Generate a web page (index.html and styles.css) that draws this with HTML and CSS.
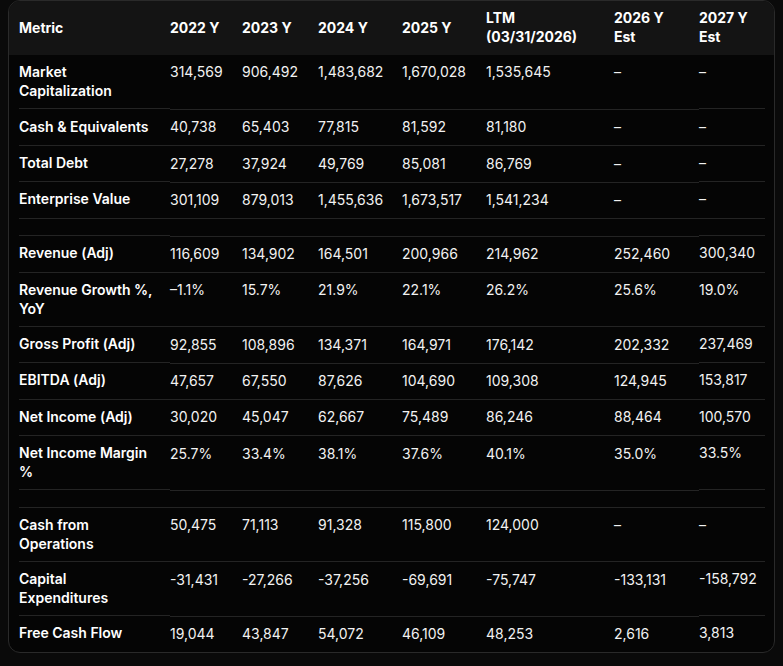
FILE: index.html
```html
<!DOCTYPE html>
<html>
<head>
<meta charset="utf-8">
<link rel="stylesheet" href="styles.css">
</head>
<body>
<div class="card">
  <table class="metrics">
    <colgroup>
      <col class="c-metric"><col class="c-22"><col class="c-23"><col class="c-24"><col class="c-25"><col class="c-ltm"><col class="c-26"><col class="c-27">
    </colgroup>
    <thead>
      <tr>
        <th class="first">Metric</th><th>2022 Y</th><th>2023 Y</th><th>2024 Y</th><th>2025 Y</th><th>LTM<br>(03/31/2026)</th><th>2026 Y<br>Est</th><th class="last">2027 Y<br>Est</th>
      </tr>
    </thead>
    <tbody>
      <tr><td class="label">Market<br>Capitalization</td><td>314,569</td><td>906,492</td><td>1,483,682</td><td>1,670,028</td><td>1,535,645</td><td>–</td><td>–</td></tr>
      <tr><td class="label">Cash &amp; Equivalents</td><td>40,738</td><td>65,403</td><td>77,815</td><td>81,592</td><td>81,180</td><td>–</td><td>–</td></tr>
      <tr><td class="label">Total Debt</td><td>27,278</td><td>37,924</td><td>49,769</td><td>85,081</td><td>86,769</td><td>–</td><td>–</td></tr>
      <tr><td class="label">Enterprise Value</td><td>301,109</td><td>879,013</td><td>1,455,636</td><td>1,673,517</td><td>1,541,234</td><td>–</td><td>–</td></tr>
      <tr class="spacer"><td></td><td></td><td></td><td></td><td></td><td></td><td></td><td></td></tr>
      <tr><td class="label">Revenue (Adj)</td><td>116,609</td><td>134,902</td><td>164,501</td><td>200,966</td><td>214,962</td><td>252,460</td><td>300,340</td></tr>
      <tr><td class="label">Revenue Growth %,<br>YoY</td><td>–1.1%</td><td>15.7%</td><td>21.9%</td><td>22.1%</td><td>26.2%</td><td>25.6%</td><td>19.0%</td></tr>
      <tr><td class="label">Gross Profit (Adj)</td><td>92,855</td><td>108,896</td><td>134,371</td><td>164,971</td><td>176,142</td><td>202,332</td><td>237,469</td></tr>
      <tr><td class="label">EBITDA (Adj)</td><td>47,657</td><td>67,550</td><td>87,626</td><td>104,690</td><td>109,308</td><td>124,945</td><td>153,817</td></tr>
      <tr><td class="label">Net Income (Adj)</td><td>30,020</td><td>45,047</td><td>62,667</td><td>75,489</td><td>86,246</td><td>88,464</td><td>100,570</td></tr>
      <tr><td class="label">Net Income Margin<br>%</td><td>25.7%</td><td>33.4%</td><td>38.1%</td><td>37.6%</td><td>40.1%</td><td>35.0%</td><td>33.5%</td></tr>
      <tr class="spacer"><td></td><td></td><td></td><td></td><td></td><td></td><td></td><td></td></tr>
      <tr><td class="label">Cash from<br>Operations</td><td>50,475</td><td>71,113</td><td>91,328</td><td>115,800</td><td>124,000</td><td>–</td><td>–</td></tr>
      <tr><td class="label">Capital<br>Expenditures</td><td>-31,431</td><td>-27,266</td><td>-37,256</td><td>-69,691</td><td>-75,747</td><td>-133,131</td><td>-158,792</td></tr>
      <tr class="end"><td class="label">Free Cash Flow</td><td>19,044</td><td>43,847</td><td>54,072</td><td>46,109</td><td>48,253</td><td>2,616</td><td>3,813</td></tr>
    </tbody>
  </table>
</div>
</body>
</html>
```

FILE: styles.css
```css
html, body {
  margin: 0;
  background: #0a0a0a;
}
body {
  padding: 0 8px 10px 8px;
  font-family: Inter, "Noto Sans", "Liberation Sans", sans-serif;
  font-size: 14px;
  color: #f2f2f2;
}
.card {
  border: 1px solid #2a2a2a;
  border-radius: 12px;
  background: #050505;
  overflow: hidden;
  width: 765px;
}
.metrics {
  border-collapse: collapse;
  table-layout: fixed;
  width: 765px;
}
.c-metric { width: 161px; }
.c-22 { width: 72px; }
.c-23 { width: 76px; }
.c-24 { width: 84px; }
.c-25 { width: 84px; }
.c-ltm { width: 128px; }
.c-26 { width: 85px; }
.c-27 { width: 75px; }
thead th {
  background: #141414;
  text-align: left;
  font-weight: 700;
  color: #ffffff;
  padding: 8.3px 0;
  line-height: 18.8px;
  vertical-align: middle;
}
thead th.first { padding-left: 10px; }
tbody td {
  padding: 8.3px 0;
  line-height: 18.8px;
  vertical-align: top;
  border-bottom: 1px solid #242424;
  font-weight: 400;
  white-space: nowrap;
}
tbody td:first-child {
  padding-left: 10px;
  border-bottom: none;
  background-image: linear-gradient(#242424, #242424);
  background-repeat: no-repeat;
  background-position: 10px 100%;
  background-size: 100% 1px;
}
tbody td:last-child {
  border-bottom: none;
  background-image: linear-gradient(#242424, #242424);
  background-repeat: no-repeat;
  background-position: 0 100%;
  background-size: calc(100% - 9px) 1px;
}
tbody td.label {
  font-weight: 600;
  color: #ffffff;
}
tbody tr.spacer td {
  height: 0;
  padding: 8.3px 0;
}
tbody tr.end td {
  border-bottom: none;
  background-image: none;
}
```
